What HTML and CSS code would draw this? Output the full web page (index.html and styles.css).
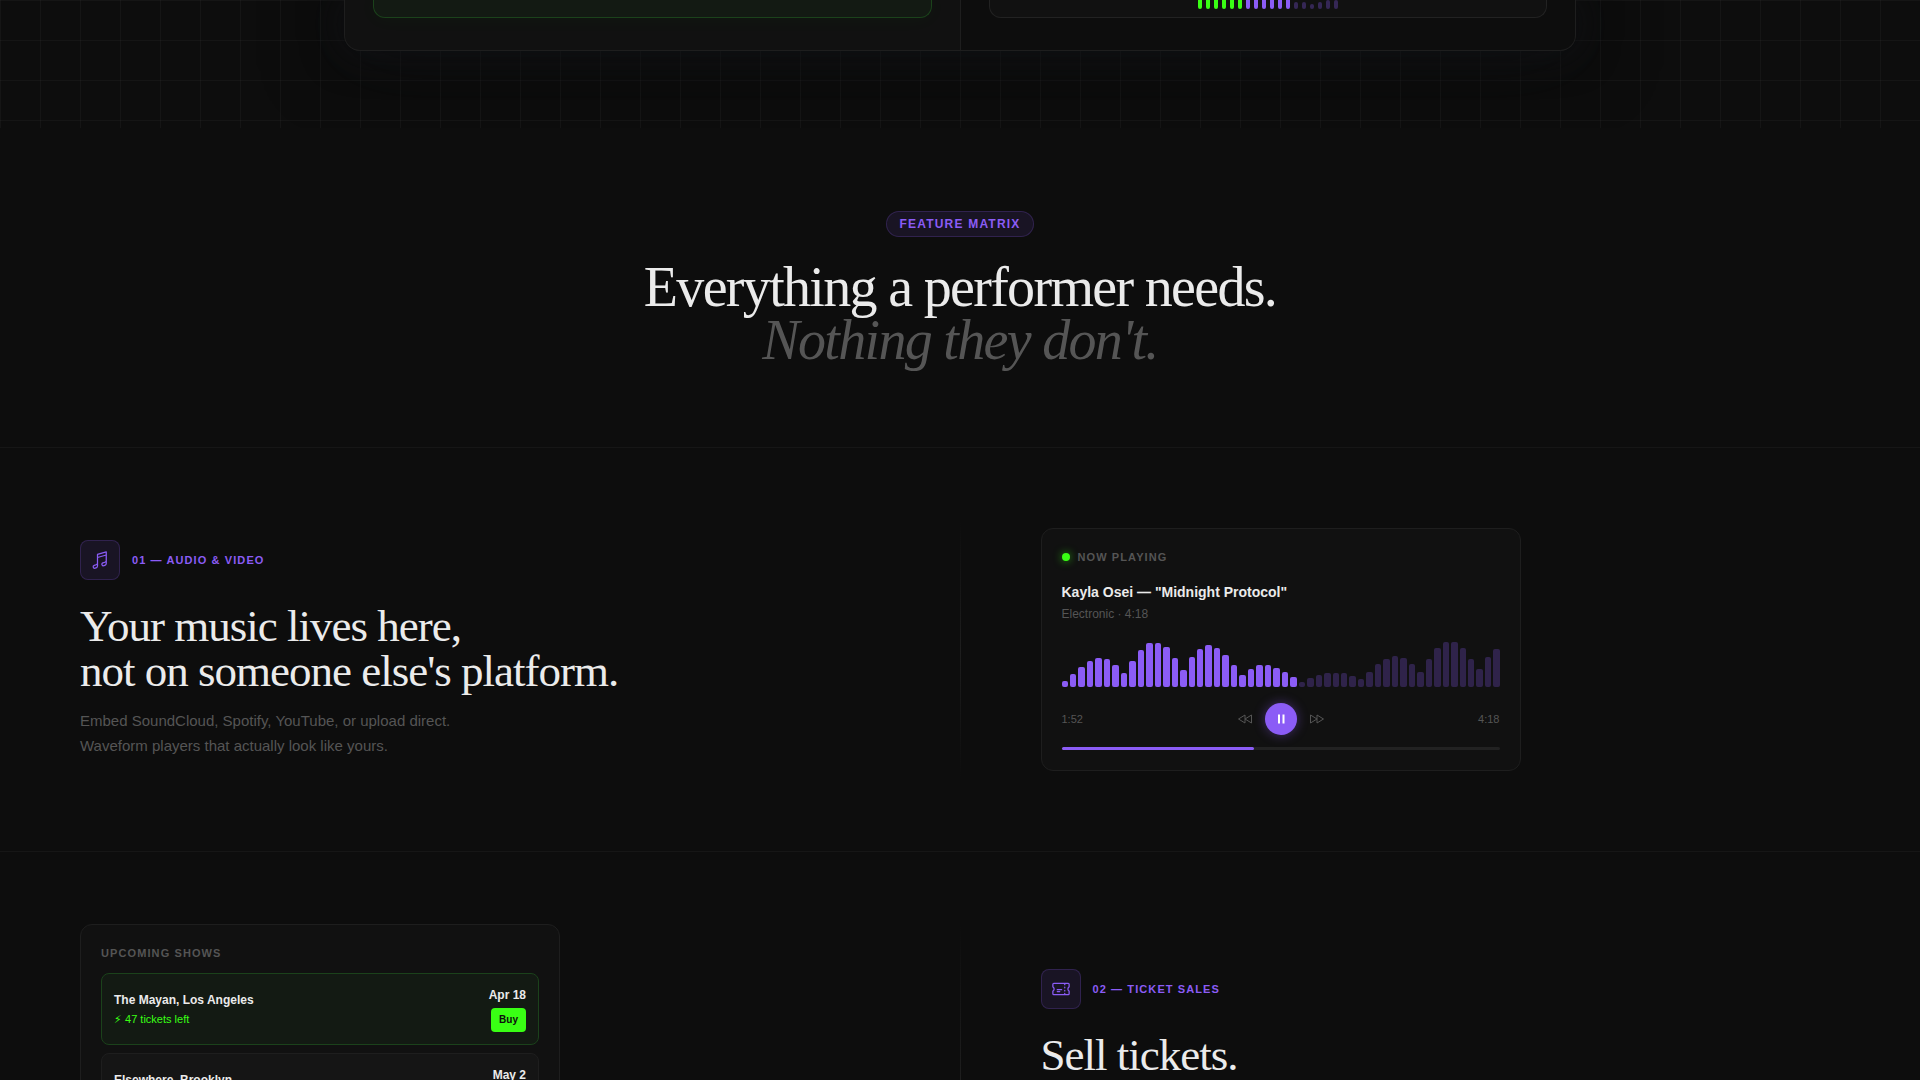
FILE: index.html
```
<!DOCTYPE html>
<html lang="en">
<head>
    <meta charset="UTF-8">
    <meta name="viewport" content="width=device-width, initial-scale=1.0">
    <title>Feature Matrix</title>
    <link rel="stylesheet" href="styles.css">
</head>
<body>
<main class="page">
    <section class="hero">
        <div class="compare">
            <div class="compare-side compare-side--left">
                <div class="compare-card compare-card--green"></div>
            </div>
            <div class="compare-side">
                <div class="compare-card">
                    <div class="mini-bars" id="miniBars"></div>
                </div>
            </div>
        </div>
    </section>

    <section class="intro">
        <span class="badge">Feature Matrix</span>
        <h2 class="intro-title">Everything a performer needs.<br><em>Nothing they don't.</em></h2>
    </section>

    <section class="feature">
        <div class="feature-text">
            <div class="eyebrow">
                <span class="eyebrow-icon">
                    <svg viewBox="0 0 24 24" aria-hidden="true"><path d="M9 9l10.500-3m0 6.553v3.750a2.250 2.250 0 0 1-1.632 2.163l-1.320.377a1.803 1.803 0 1 1-.99-3.467l2.310-.66a2.250 2.250 0 0 0 1.632-2.163Zm0 0V2.250L9 5.250v10.303m0 0v3.750a2.250 2.250 0 0 1-1.632 2.163l-1.320.377a1.803 1.803 0 0 1-.99-3.467l2.310-.66A2.250 2.250 0 0 0 9 15.553Z"/></svg>
                </span>
                <span class="eyebrow-label">01 — Audio &amp; Video</span>
            </div>
            <h3 class="feature-title">Your music lives here,<br>not on someone else's platform.</h3>
            <p class="feature-desc">Embed SoundCloud, Spotify, YouTube, or upload direct.<br>Waveform players that actually look like yours.</p>
        </div>
        <div class="divider"></div>
        <div class="feature-visual">
            <div class="panel">
                <div class="panel-label"><span class="live-dot"></span>Now Playing</div>
                <div class="track-title">Kayla Osei — "Midnight Protocol"</div>
                <div class="track-meta">Electronic · 4:18</div>
                <div class="waveform" id="waveform"></div>
                <div class="controls">
                    <span class="time">1:52</span>
                    <div class="transport">
                        <button type="button" class="skip" aria-label="Previous">
                            <svg viewBox="0 0 16 16" aria-hidden="true"><path d="M8 4v8L1.500 8zM14.500 4v8L8 8z"/></svg>
                        </button>
                        <button type="button" class="play" aria-label="Pause">
                            <svg viewBox="0 0 12 12" aria-hidden="true"><path d="M3 1.500h2v9H3zM7.500 1.500h2v9h-2z"/></svg>
                        </button>
                        <button type="button" class="skip" aria-label="Next">
                            <svg viewBox="0 0 16 16" aria-hidden="true"><path d="M1.500 4v8L8 8zM8 4v8l6.500-4z"/></svg>
                        </button>
                    </div>
                    <span class="time">4:18</span>
                </div>
                <div class="progress"><div class="progress-fill"></div></div>
            </div>
        </div>
    </section>

    <section class="feature feature--tickets">
        <div class="feature-visual">
            <div class="panel">
                <div class="panel-label">Upcoming Shows</div>
                <ul class="shows">
                    <li class="show show--hot">
                        <div class="show-info">
                            <span class="show-name">The Mayan, Los Angeles</span>
                            <span class="show-stock">&#9889;&#xFE0E; 47 tickets left</span>
                        </div>
                        <div class="show-side">
                            <span class="show-date">Apr 18</span>
                            <button type="button" class="buy">Buy</button>
                        </div>
                    </li>
                    <li class="show">
                        <div class="show-info">
                            <span class="show-name">Elsewhere, Brooklyn</span>
                            <span class="show-stock">On sale</span>
                        </div>
                        <div class="show-side">
                            <span class="show-date">May 2</span>
                            <button type="button" class="buy">Buy</button>
                        </div>
                    </li>
                </ul>
            </div>
        </div>
        <div class="divider"></div>
        <div class="feature-text">
            <div class="eyebrow">
                <span class="eyebrow-icon">
                    <svg viewBox="0 0 24 24" aria-hidden="true"><path d="M16.500 6v.75m0 3v.75m0 3v.75m0 3V18m-9-5.250h5.250M7.500 15h3M3.375 5.250c-.621 0-1.125.504-1.125 1.125v3.026a2.999 2.999 0 0 1 0 5.198v3.026c0 .621.504 1.125 1.125 1.125h17.250c.621 0 1.125-.504 1.125-1.125v-3.026a2.999 2.999 0 0 1 0-5.198V6.375c0-.621-.504-1.125-1.125-1.125H3.375Z"/></svg>
                </span>
                <span class="eyebrow-label">02 — Ticket Sales</span>
            </div>
            <h3 class="feature-title">Sell tickets.</h3>
        </div>
    </section>
</main>
<script src="script.js"></script>
</body>
</html>
```
FILE: styles.css
```
:root {
    --bg: #0d0d0d; --surface: #111111; --line: #1e1e1e;
    --text: #ebebeb; --muted: #555555;
    --violet: #8b5cf6; --green: #39ff14;
    --font-display: "Liberation Serif", serif;
    --font-body: "Liberation Sans", sans-serif;
}
* { box-sizing: border-box; }
body { margin: 0; background: var(--bg); color: var(--text); font-family: var(--font-body); }
h2, h3, p, ul { margin: 0; padding: 0; }
button { border: 0; padding: 0; font-family: inherit; cursor: pointer; }
.page { height: 100vh; overflow: hidden; }

/* Hero */
.hero {
    padding-bottom: 77px; overflow: hidden;
    background-image: linear-gradient(rgba(255, 255, 255, 0.03) 1px, transparent 1px), linear-gradient(90deg, rgba(255, 255, 255, 0.03) 1px, transparent 1px);
    background-size: 40px 40px;
}
.compare {
    max-width: 1232px; margin: 0 auto; display: grid; grid-template-columns: 1fr 1fr; gap: 1px;
    background: var(--line); border: 1px solid var(--line); border-top: 0; border-radius: 0 0 16px 16px;
    overflow: hidden; box-shadow: 0 0 40px rgba(20, 22, 28, 0.6), 0 0 80px rgba(10, 12, 11, 0.7);
}
.compare-side { padding: 0 28px 32px; background: var(--bg); }
.compare-side--left { background: var(--surface); }
.compare-card { height: 18px; padding-bottom: 8px; display: flex; align-items: flex-end; justify-content: center; background: var(--surface); border: 1px solid #222222; border-top: 0; border-radius: 0 0 12px 12px; }
.compare-card--green { background: #131a13; border-color: #1b421b; box-shadow: 0 0 20px rgba(57, 255, 20, 0.04); }
.mini-bars { display: flex; align-items: flex-end; gap: 4px; }
.mini-bars span { width: 4px; border-radius: 0 0 2px 2px; background: var(--violet); }
.mini-bars .hot { background: var(--green); }
.mini-bars .idle { border-radius: 2px; opacity: 0.3; }

/* Section intro */
.intro { padding: 83px 40px 80px; text-align: center; border-bottom: 1px solid #161616; }
.badge {
    display: inline-block; padding: 5px 12px; border: 1px solid rgba(139, 92, 246, 0.2); border-radius: 100px;
    background: rgba(139, 92, 246, 0.1); color: var(--violet);
    font-size: 12px; line-height: 14px; font-weight: 700; letter-spacing: 0.1em; text-transform: uppercase;
}
.intro-title { margin-top: 24px; font: 400 56px/53px var(--font-display); letter-spacing: -0.03em; }
.intro-title em { color: var(--muted); }

/* Feature rows */
.feature { display: grid; grid-template-columns: 1fr 1px 1fr; align-items: center; padding: 72px 0; border-bottom: 1px solid #161616; }
.feature--tickets { min-height: 453px; }
.feature--tickets .feature-visual { align-self: start; }
.feature-text { min-height: 259px; padding: 20px 80px; }
.feature-visual { padding: 0 80px; }
.divider { align-self: stretch; background: linear-gradient(to bottom, transparent, var(--line), transparent); }
.eyebrow { display: flex; align-items: center; gap: 12px; margin-bottom: 24px; }
.eyebrow-icon { display: flex; align-items: center; justify-content: center; width: 40px; height: 40px; border: 1px solid rgba(139, 92, 246, 0.2); border-radius: 8px; background: rgba(139, 92, 246, 0.1); }
.eyebrow-icon svg { width: 20px; height: 20px; fill: none; stroke: var(--violet); stroke-width: 1.5; stroke-linecap: round; stroke-linejoin: round; }
.eyebrow-label { color: var(--violet); font-size: 11px; font-weight: 700; letter-spacing: 0.1em; text-transform: uppercase; }
.feature-title { font: 400 45px/45px var(--font-display); letter-spacing: -1px; }
.feature-desc { margin-top: 14px; color: var(--muted); font-size: 15px; line-height: 25px; }

/* Panels */
.panel { max-width: 480px; padding: 20px; border: 1px solid var(--line); border-radius: 12px; background: var(--surface); }
.panel-label { display: flex; align-items: center; gap: 8px; color: var(--muted); font-size: 11px; line-height: 16px; font-weight: 700; letter-spacing: 0.1em; text-transform: uppercase; }
.live-dot { width: 8px; height: 8px; border-radius: 50%; background: var(--green); box-shadow: 0 0 8px rgba(57, 255, 20, 0.6); }
.track-title { margin-top: 18px; font-size: 14px; line-height: 18px; font-weight: 700; }
.track-meta { margin-top: 5px; color: var(--muted); font-size: 12px; line-height: 16px; }
.waveform { display: flex; align-items: flex-end; gap: 2px; height: 48px; margin-top: 17px; }
.waveform span { flex: 1; border-radius: 2px; background: var(--violet); }
.waveform .idle { opacity: 0.25; }
.controls { display: flex; align-items: center; justify-content: space-between; margin: 16px 0 12px; }
.time { color: var(--muted); font-size: 11px; }
.transport { display: flex; align-items: center; gap: 12px; }
.skip { display: flex; background: none; }
.skip svg { width: 16px; height: 16px; fill: none; stroke: var(--muted); }
.play { display: flex; align-items: center; justify-content: center; width: 32px; height: 32px; border-radius: 50%; background: var(--violet); box-shadow: 0 0 12px rgba(139, 92, 246, 0.4); }
.play svg { width: 12px; height: 12px; fill: #ffffff; }
.progress { height: 3px; border-radius: 2px; background: #222222; }
.progress-fill { width: 44%; height: 3px; border-radius: 2px; background: var(--violet); }

/* Shows */
.shows { display: flex; flex-direction: column; gap: 8px; margin-top: 12px; list-style: none; }
.show { display: flex; align-items: center; justify-content: space-between; min-height: 72px; padding: 12px; border: 1px solid var(--line); border-radius: 8px; background: #151515; }
.show--hot { border-color: #1b421b; background: #131a13; }
.show-info { display: flex; flex-direction: column; gap: 4px; }
.show-name, .show-date { font-size: 12px; line-height: 16px; font-weight: 700; }
.show-stock { color: var(--muted); font-size: 11px; line-height: 14px; }
.show--hot .show-stock { color: var(--green); }
.show-side { display: flex; flex-direction: column; align-items: flex-end; gap: 5px; }
.buy { height: 24px; padding: 0 8px; border-radius: 4px; background: var(--green); color: var(--bg); font-size: 10px; font-weight: 700; }
```
FILE: script.js
```
const waveform = document.getElementById('waveform');
const miniBars = document.getElementById('miniBars');

const levels = [
    6, 13, 20, 26, 29, 28, 22, 14, 26, 37, 44, 44, 40, 29, 17, 30, 38, 42, 39, 32, 22, 12, 18, 22, 22, 19, 15, 10,
    5, 9, 12, 14, 14, 14, 11, 8, 15, 23, 28, 31, 29, 23, 15, 28, 39, 45, 45, 39, 28, 18, 30, 38
];
const played = 28;

const miniLevels = [9, 9, 9, 9, 9, 9, 9, 9, 9, 9, 9, 9, 7, 7, 5, 7, 9, 9];

function addBar(parent, height, className) {
    const bar = document.createElement('span');
    bar.style.height = height + 'px';
    bar.className = className;
    parent.appendChild(bar);
}

levels.forEach((h, i) => addBar(waveform, h, i < played ? '' : 'idle'));
miniLevels.forEach((h, i) => addBar(miniBars, h, i < 6 ? 'hot' : i < 12 ? '' : 'idle'));
```
